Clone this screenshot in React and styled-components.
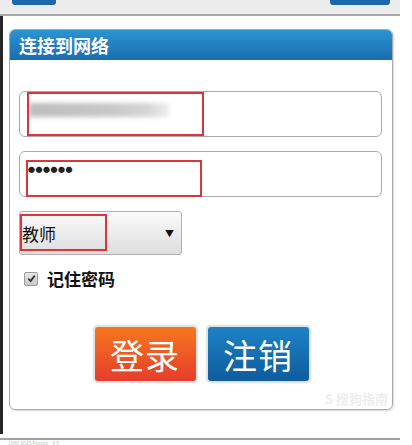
import React from 'react'
import styled, { createGlobalStyle } from 'styled-components'

const Global = createGlobalStyle`
  html, body {
    margin: 0;
    background: #fff;
    font-family: "Noto Sans CJK SC", "Noto Sans", sans-serif;
  }
`

const Page = styled('div')`
  width: 400px;
  height: 445px;
  overflow: hidden;
  position: relative;
`

const TopBar = styled('div')`
  height: 14px;
  background: #ececec;
  border-bottom: 2px solid #a8a8a8;
  display: flex;
  justify-content: space-between;
  padding: 0 10px 0 12px;
`

const TopButton = styled('div')`
  width: ${props => props.w}px;
  height: 5px;
  background: #1c67a8;
  border-radius: 0 0 3px 3px;
`

const Main = styled('div')`
  border-left: 3px solid #262626;
  padding: 13px 0 24px 6px;
`

const Panel = styled('div')`
  width: 382px;
  border: 1px solid #a9a9a9;
  border-radius: 6px;
  box-shadow: 1px 1px 2px rgba(0, 0, 0, 0.15);
  position: relative;
`

const PanelHead = styled('div')`
  height: 30px;
  background: linear-gradient(#2c93d4, #1a6dad);
  border-radius: 5px 5px 0 0;
  color: #fff;
  font-weight: 700;
  font-size: 18px;
  line-height: 30px;
  padding-left: 9px;
`

const PanelBody = styled('div')`
  padding: 31px 10px 26px 9px;
  display: flex;
  flex-direction: column;
`

const Field = styled('div')`
  height: 44px;
  border: 1px solid #a9a9a9;
  border-radius: 6px;
  position: relative;
  margin-bottom: 14px;
  background: #fff;
`

const Mark = styled('div')`
  position: absolute;
  border: 2px solid #d8363b;
  left: ${props => props.l}px;
  top: ${props => props.t}px;
  width: ${props => props.w}px;
  height: ${props => props.h}px;
  box-sizing: border-box;
`

const Blur = styled('div')`
  position: absolute;
  left: 9px;
  top: 11px;
  width: 140px;
  height: 14px;
  background: linear-gradient(90deg, #bdbdbd, #c8c8c8 60%, #d6d6d6 85%, #eee);
  filter: blur(2px);
`

const Dots = styled('div')`
  position: absolute;
  left: 8px;
  top: 13px;
  font-size: 7px;
  letter-spacing: 0.5px;
  color: #222;
  line-height: 8px;
`

const Select = styled('div')`
  width: 163px;
  height: 44px;
  border: 1px solid #b0b0b0;
  border-radius: 3px;
  background: linear-gradient(#fafafa, #dedede);
  display: flex;
  align-items: center;
  justify-content: space-between;
  padding: 0 7px 0 2px;
  box-sizing: border-box;
  position: relative;
  font-size: 17px;
  color: #111;
`

const Arrow = styled('span')`
  font-size: 9px;
  color: #111;
`

const CheckRow = styled('label')`
  display: flex;
  align-items: center;
  gap: 9px;
  margin: 11px 0 0 5px;
  font-weight: 700;
  font-size: 17px;
  color: #111;
`

const Box = styled('span')`
  width: 12px;
  height: 12px;
  border: 1px solid #9c9c9c;
  border-radius: 2px;
  background: linear-gradient(#e6e6e6, #c8c8c8);
  display: flex;
  align-items: center;
  justify-content: center;
`

const Buttons = styled('div')`
  display: flex;
  justify-content: center;
  gap: 8px;
  margin-top: 34px;
  padding-left: 2px;
`

const Btn = styled('div')`
  width: 101px;
  height: 54px;
  border: 2px solid #e2e2e2;
  border-radius: 5px;
  box-shadow: 0 0 1px rgba(0, 0, 0, 0.3);
  background: ${props => props.orange
    ? 'linear-gradient(#f6771e, #e53d2c)'
    : 'linear-gradient(#1d82c6, #0e5c9d)'};
  color: #fff;
  font-size: 34px;
  display: flex;
  align-items: center;
  justify-content: center;
  letter-spacing: 1px;
`

const Watermark = styled('div')`
  position: absolute;
  right: 4px;
  bottom: 1px;
  font-size: 13px;
  color: rgba(225, 225, 225, 0.6);
  text-shadow: 0 0 2px rgba(255, 255, 255, 0.9);
  font-weight: 700;
`

const Footer = styled('div')`
  border-top: 2px solid #a0a0a0;
  margin-top: 4px;
  padding-left: 8px;
  font-size: 5px;
  color: #bbb;
  line-height: 6px;
`

export default function App() {
  return (
    <Page>
      <Global />
      <TopBar>
        <TopButton w={44} />
        <TopButton w={60} />
      </TopBar>
      <Main>
        <Panel>
          <PanelHead>连接到网络</PanelHead>
          <PanelBody>
            <Field>
              <Blur />
              <Mark l={7} t={0} w={177} h={44} />
            </Field>
            <Field>
              <Dots>●●●●●●</Dots>
              <Mark l={6} t={8} w={176} h={37} />
            </Field>
            <Select>
              <span>教师</span>
              <Arrow>▼</Arrow>
              <Mark l={0} t={2} w={87} h={37} />
            </Select>
            <CheckRow>
              <Box>
                <svg width="9" height="9" viewBox="0 0 10 10">
                  <path d="M1.5 5.2 L4 7.8 L8.6 1.8" fill="none" stroke="#333" strokeWidth="2" />
                </svg>
              </Box>
              记住密码
            </CheckRow>
            <Buttons>
              <Btn orange>登录</Btn>
              <Btn>注销</Btn>
            </Buttons>
          </PanelBody>
          <Watermark>S 搜狗指南</Watermark>
        </Panel>
      </Main>
      <Footer>1000 2015 Pxxxxx &nbsp;&nbsp; 6 5</Footer>
    </Page>
  )
}
